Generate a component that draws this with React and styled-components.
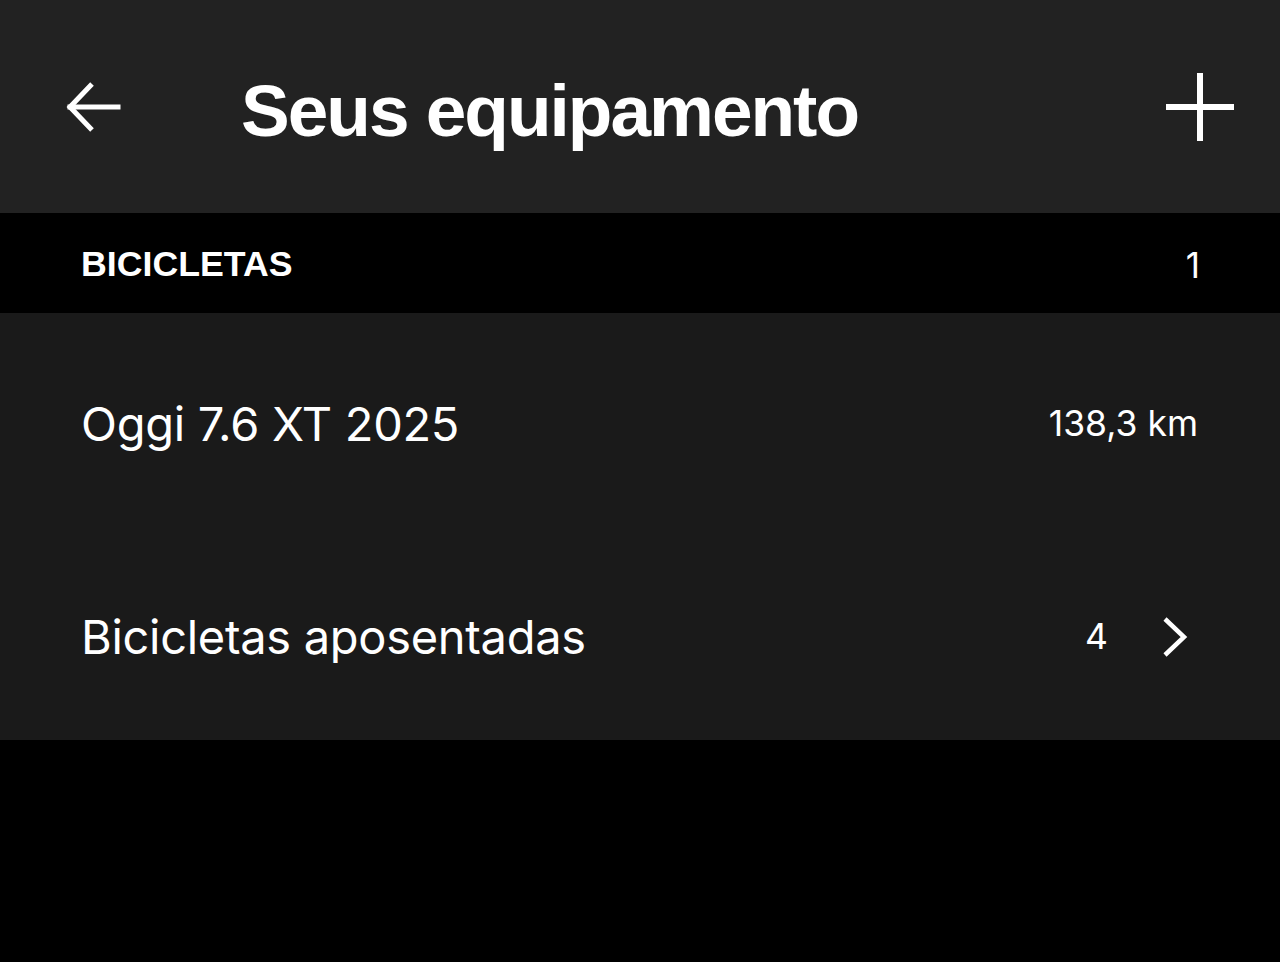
import React from "react";
import styled, { createGlobalStyle } from "styled-components";

const Global = createGlobalStyle`
  html, body { margin: 0; padding: 0; background: #000; }
  body { font-family: Inter, "Liberation Sans", sans-serif; color: #fff; }
`;

const Page = styled.div`
  width: 1280px;
  height: 962px;
  background: #000;
  display: flex;
  flex-direction: column;
`;

const Header = styled.header`
  height: 213px;
  background: #222222;
  display: flex;
  align-items: center;
  padding: 0 46px 0 66px;
  box-sizing: border-box;
`;

const IconButton = styled.button`
  background: none;
  border: 0;
  padding: 0;
  display: flex;
  align-items: center;
  justify-content: center;
  color: #fff;
  cursor: pointer;
`;

const Title = styled.h1`
  flex: 1;
  margin: 0 0 0 119px;
  padding-top: 8px;
  font-family: "Liberation Sans", Arial, sans-serif;
  font-weight: 700;
  font-size: 73px;
  letter-spacing: -2px;
  line-height: 1;
`;

const SectionHeader = styled.div`
  height: 100px;
  background: #000;
  display: flex;
  align-items: center;
  justify-content: space-between;
  padding: 3px 80px 0 81px;
  box-sizing: border-box;
`;

const SectionLabel = styled.span`
  font-family: "Liberation Sans", Arial, sans-serif;
  font-weight: 700;
  font-size: 35.7px;
`;

const SectionCount = styled.span`
  font-size: 35px;
  font-weight: 400;
`;

const List = styled.div`
  background: #1a1a1a;
  display: flex;
  flex-direction: column;
`;

const Row = styled.div`
  height: ${(p) => p.$h}px;
  display: flex;
  align-items: center;
  justify-content: space-between;
  padding: 6px ${(p) => p.$pr}px 0 81px;
  box-sizing: border-box;
`;

const RowLabel = styled.span`
  font-size: 47px;
  font-weight: 400;
  letter-spacing: -0.3px;
`;

const RowValue = styled.span`
  font-size: 35.5px;
  font-weight: 400;
  display: flex;
  align-items: center;
  gap: 54px;
`;

export default function App() {
  return (
    <Page>
      <Global />
      <Header>
        <IconButton aria-label="Voltar">
          <svg width="56" height="54" viewBox="0 0 56 54" fill="none" stroke="#fff" strokeWidth="5" strokeLinecap="square">
            <path d="M4 27 H52" />
            <path d="M26 4 L4 27 L26 50" strokeLinecap="butt" />
          </svg>
        </IconButton>
        <Title>Seus equipamento</Title>
        <IconButton aria-label="Adicionar">
          <svg width="68" height="68" viewBox="0 0 68 68" fill="none" stroke="#fff" strokeWidth="6">
            <path d="M34 0 V68" />
            <path d="M0 34 H68" />
          </svg>
        </IconButton>
      </Header>
      <SectionHeader>
        <SectionLabel>BICICLETAS</SectionLabel>
        <SectionCount>1</SectionCount>
      </SectionHeader>
      <List>
        <Row $h={214} $pr={82}>
          <RowLabel>Oggi 7.6 XT 2025</RowLabel>
          <RowValue>138,3 km</RowValue>
        </Row>
        <Row $h={213} $pr={92}>
          <RowLabel>Bicicletas aposentadas</RowLabel>
          <RowValue>
            4
            <svg width="26" height="40" viewBox="0 0 26 40" fill="none" stroke="#fff" strokeWidth="4.5">
              <path d="M3 2 L22 20 L3 38" />
            </svg>
          </RowValue>
        </Row>
      </List>
    </Page>
  );
}
